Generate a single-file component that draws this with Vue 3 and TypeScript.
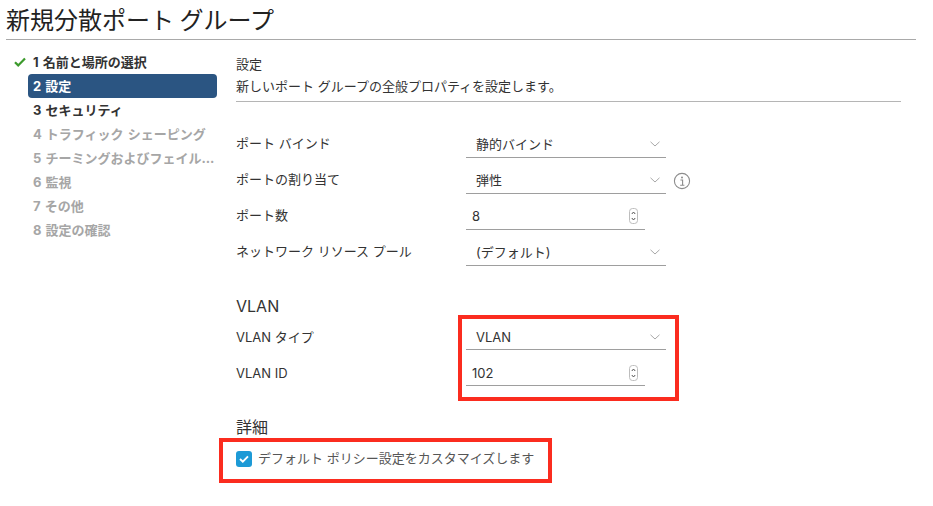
<script setup lang="ts">
const steps = [
  { label: '名前と場所の選択', num: 1, state: 'done' },
  { label: '設定', num: 2, state: 'active' },
  { label: 'セキュリティ', num: 3, state: 'todo' },
  { label: 'トラフィック シェーピング', num: 4, state: 'off' },
  { label: 'チーミングおよびフェイル...', num: 5, state: 'off' },
  { label: '監視', num: 6, state: 'off' },
  { label: 'その他', num: 7, state: 'off' },
  { label: '設定の確認', num: 8, state: 'off' },
]
</script>

<template>
  <div class="wizard">
    <h1 class="title">新規分散ポート グループ</h1>
    <div class="body">
      <nav class="steps">
        <div v-for="s in steps" :key="s.num" class="step" :class="s.state">
          <svg v-if="s.state === 'done'" class="check" width="12" height="10" viewBox="0 0 12 10">
            <path d="M1 5.2 L4.2 8.4 L11 1.4" fill="none" stroke="#3c9a2c" stroke-width="2.2" />
          </svg>
          <span class="step-label">{{ s.num }} {{ s.label }}</span>
        </div>
      </nav>
      <main class="content">
        <header class="head">
          <div class="head-title">設定</div>
          <div class="head-sub">新しいポート グループの全般プロパティを設定します。</div>
        </header>

        <div class="rows">
          <div class="row">
            <label>ポート バインド</label>
            <div class="select">
              <span>静的バインド</span>
              <svg class="chev" width="10" height="6" viewBox="0 0 10 6"><path d="M.5.8 5 5 9.5.8" /></svg>
            </div>
          </div>
          <div class="row">
            <label>ポートの割り当て</label>
            <div class="select">
              <span>弾性</span>
              <svg class="chev" width="10" height="6" viewBox="0 0 10 6"><path d="M.5.8 5 5 9.5.8" /></svg>
            </div>
            <svg class="info" width="18" height="18" viewBox="0 0 18 18">
              <circle cx="9" cy="9" r="7.6" fill="none" stroke="#8c8c8c" stroke-width="1.1" />
              <circle cx="9" cy="5.5" r="1" fill="#8c8c8c" />
              <path d="M7.4 8h2.2v5M7.2 13.2h4.2" fill="none" stroke="#8c8c8c" stroke-width="1.1" />
            </svg>
          </div>
          <div class="row">
            <label>ポート数</label>
            <div class="number">
              <span>8</span>
              <svg class="spin" width="9" height="16" viewBox="0 0 9 16">
                <rect x=".5" y=".5" width="8" height="15" rx="3" fill="#fff" stroke="#bdbdbd" />
                <path d="M2.8 6 4.5 4l1.7 2M2.8 10l1.7 2 1.7-2" fill="none" stroke="#555" />
              </svg>
            </div>
          </div>
          <div class="row">
            <label>ネットワーク リソース プール</label>
            <div class="select">
              <span>(デフォルト)</span>
              <svg class="chev" width="10" height="6" viewBox="0 0 10 6"><path d="M.5.8 5 5 9.5.8" /></svg>
            </div>
          </div>
        </div>

        <h2 class="section vlan-title">VLAN</h2>
        <div class="rows vlan-rows">
          <div class="row">
            <label>VLAN タイプ</label>
            <div class="select">
              <span>VLAN</span>
              <svg class="chev" width="10" height="6" viewBox="0 0 10 6"><path d="M.5.8 5 5 9.5.8" /></svg>
            </div>
          </div>
          <div class="row">
            <label>VLAN ID</label>
            <div class="number">
              <span>102</span>
              <svg class="spin" width="9" height="16" viewBox="0 0 9 16">
                <rect x=".5" y=".5" width="8" height="15" rx="3" fill="#fff" stroke="#bdbdbd" />
                <path d="M2.8 6 4.5 4l1.7 2M2.8 10l1.7 2 1.7-2" fill="none" stroke="#555" />
              </svg>
            </div>
            <div class="mark mark-vlan"></div>
          </div>
        </div>

        <h2 class="section adv-title">詳細</h2>
        <div class="custom">
          <span class="box">
            <svg width="10" height="8" viewBox="0 0 10 8"><path d="M1 4 3.8 6.6 9 1.4" fill="none" stroke="#fff" stroke-width="1.9" /></svg>
          </span>
          <span class="custom-text">デフォルト ポリシー設定をカスタマイズします</span>
          <div class="mark mark-custom"></div>
        </div>
      </main>
    </div>
  </div>
</template>

<style>
html, body {
  background: #fff;
}
</style>

<style scoped>
.wizard {
  width: 933px;
  height: 506px;
  overflow: hidden;
  background: #fff;
  color: #333;
  font-family: Inter, "Noto Sans CJK JP", sans-serif;
  font-size: 13px;
}
.title {
  margin: 0 17px 0 6px;
  height: 40px;
  box-sizing: border-box;
  border-bottom: 1px solid #a9a9a9;
  font-family: "Noto Sans CJK JP", sans-serif;
  font-size: 24px;
  font-weight: 400;
  line-height: 38px;
  color: #222;
}
.body {
  display: flex;
}
.steps {
  width: 189px;
  margin: 10px 0 0 28px;
  flex-shrink: 0;
}
.step {
  position: relative;
  height: 24px;
  line-height: 24px;
  padding-left: 5px;
  border-radius: 4px;
  font-weight: 700;
  white-space: nowrap;
  font-size: 13px;
  word-spacing: 1px;
}
.step.done, .step.todo {
  color: #333;
}
.step.active {
  background: #2b5582;
  color: #fff;
}
.step.off {
  color: #a6a6a6;
}
.check {
  position: absolute;
  left: -14px;
  top: 7px;
}
.content {
  width: 665px;
  margin-left: 19px;
}
.head {
  height: 62px;
  padding-top: 13px;
  box-sizing: border-box;
  border-bottom: 1px solid #b5b5b5;
  line-height: 22px;
  font-size: 13px;
}
.rows {
  margin-top: 20px;
}
.row {
  position: relative;
  display: flex;
  align-items: flex-end;
  height: 36px;
}
.row label {
  width: 230px;
  align-self: center;
  padding-top: 6px;
  font-size: 13px;
  line-height: 20px;
}
.select, .number {
  display: flex;
  align-items: center;
  justify-content: space-between;
  height: 26px;
  box-sizing: border-box;
  border-bottom: 1px solid #9e9e9e;
  line-height: 20px;
  padding-bottom: 2px;
}
.select {
  width: 200px;
  padding-left: 10px;
  padding-right: 6px;
}
.number {
  width: 179px;
  padding-left: 6px;
  padding-right: 7px;
}
.chev {
  fill: none;
  stroke: #a8a8a8;
  stroke-width: 1;
}
.info {
  margin: 0 0 4px 7px;
}
.section {
  margin: 0;
  font-size: 16px;
  font-weight: 400;
  line-height: 22px;
  color: #333;
}
.vlan-title {
  margin-top: 29px;
}
.vlan-rows {
  margin-top: -3px;
}
.vlan-rows label {
  padding-top: 10px;
}
.vlan-rows .select, .vlan-rows .number {
  padding-bottom: 0;
}
.adv-title {
  margin-top: 30px;
}
.custom {
  position: relative;
  display: flex;
  align-items: center;
  gap: 6px;
  margin-top: 10px;
  height: 22px;
}
.box {
  display: flex;
  align-items: center;
  justify-content: center;
  width: 16px;
  height: 16px;
  border-radius: 3px;
  background: #1d9ad6;
}
.custom-text {
  color: #565656;
  font-size: 13px;
  line-height: 20px;
  margin-top: -3px;
}
.mark {
  position: absolute;
  box-sizing: border-box;
  border: 4px solid #fb2c1f;
}
.mark-vlan {
  left: 222px;
  top: -35px;
  width: 221px;
  height: 86px;
}
.mark-custom {
  left: -17px;
  top: -10px;
  width: 333px;
  height: 45px;
}
</style>
